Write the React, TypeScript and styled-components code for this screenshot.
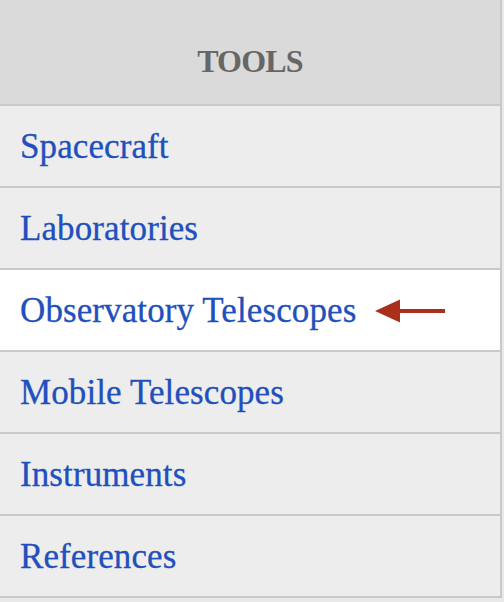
import React from "react";
import styled, { createGlobalStyle } from "styled-components";

const Global = createGlobalStyle`
  html, body {
    margin: 0;
    padding: 0;
    background: #e9e9e9;
  }
  body {
    font-family: "Liberation Serif", "Times New Roman", serif;
  }
`;

const Panel = styled.nav`
  width: 502px;
  box-sizing: border-box;
  border-right: 2px solid #c9c9c9;
  display: flex;
  flex-direction: column;
`;

const Header = styled.div`
  background: #dadada;
  border-bottom: 2px solid #c9c9c9;
  display: flex;
  align-items: flex-end;
  justify-content: center;
  padding-bottom: 27px;
  height: 77px;
`;

const Title = styled.h2`
  margin: 0;
  font-family: "Liberation Serif", "Times New Roman", serif;
  font-weight: 700;
  font-size: 32px;
  line-height: 1;
  color: #666666;
  letter-spacing: -0.8px;
`;

const List = styled.ul`
  list-style: none;
  margin: 0;
  padding: 0;
  display: flex;
  flex-direction: column;
`;

const Item = styled.li<{ $active?: boolean }>`
  height: 80px;
  background: ${(p) => (p.$active ? "#ffffff" : "#ededed")};
  border-bottom: 2px solid #c9c9c9;
  display: flex;
  align-items: center;
  gap: 19px;
  padding-left: 20px;
`;

const Link = styled.a`
  font-family: "Liberation Serif", "Times New Roman", serif;
  font-size: 35px;
  line-height: 1;
  color: #2150bd;
  text-decoration: none;
  letter-spacing: 0.1px;
  -webkit-text-stroke: 0.3px #2150bd;
`;

const Arrow = () => (
  <svg width="70" height="24" viewBox="0 0 70 24" style={{ marginTop: 2 }}>
    <polygon points="0,12 25,0.5 25,23.5" fill="#a8301d" />
    <rect x="24" y="10" width="46" height="4" fill="#a8301d" />
  </svg>
);

const items = [
  "Spacecraft",
  "Laboratories",
  "Observatory Telescopes",
  "Mobile Telescopes",
  "Instruments",
  "References",
];

export default function App() {
  return (
    <>
      <Global />
      <Panel>
        <Header>
          <Title>TOOLS</Title>
        </Header>
        <List>
          {items.map((t) => (
            <Item key={t} $active={t === "Observatory Telescopes"}>
              <Link href="#">{t}</Link>
              {t === "Observatory Telescopes" && <Arrow />}
            </Item>
          ))}
        </List>
      </Panel>
    </>
  );
}
